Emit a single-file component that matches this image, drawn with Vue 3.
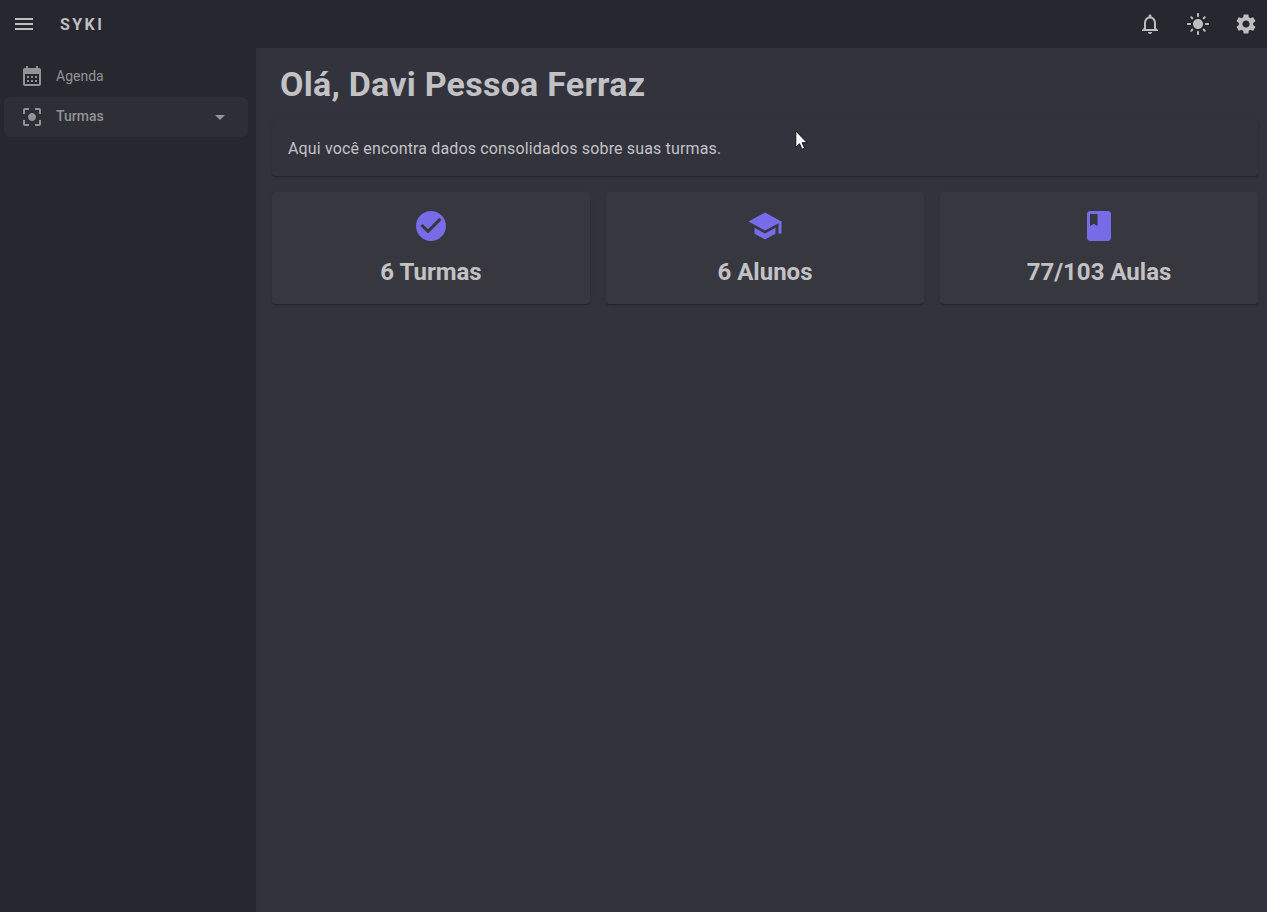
<script setup>
const cards = [
  { text: '6 Turmas', icon: 'M12 2C6.48 2 2 6.48 2 12s4.48 10 10 10 10-4.48 10-10S17.52 2 12 2zm-2 15l-5-5 1.41-1.41L10 14.17l7.59-7.59L19 8l-9 9z' },
  { text: '6 Alunos', icon: 'M5 13.18v4L12 21l7-3.82v-4L12 17l-7-3.82zM12 3L1 9l11 6 9-4.91V17h2V9L12 3z' },
  { text: '77/103 Aulas', icon: 'M18 2H6c-1.1 0-2 .9-2 2v16c0 1.1.9 2 2 2h12c1.1 0 2-.9 2-2V4c0-1.1-.9-2-2-2zM6 4h5v8l-2.5-1.5L6 12V4z' },
]
const actions = [
  'M12 22c1.1 0 2-.9 2-2h-4c0 1.1.9 2 2 2zm6-6v-5c0-3.07-1.63-5.64-4.5-6.32V4c0-.83-.67-1.5-1.5-1.5s-1.5.67-1.5 1.5v.68C7.64 5.36 6 7.92 6 11v5l-2 2v1h16v-1l-2-2zm-2 1H8v-6c0-2.48 1.51-4.5 4-4.5s4 2.02 4 4.5v6z',
  'M12 7c-2.76 0-5 2.24-5 5s2.24 5 5 5 5-2.24 5-5-2.24-5-5-5zM2 13h2c.55 0 1-.45 1-1s-.45-1-1-1H2c-.55 0-1 .45-1 1s.45 1 1 1zm18 0h2c.55 0 1-.45 1-1s-.45-1-1-1h-2c-.55 0-1 .45-1 1s.45 1 1 1zM11 2v2c0 .55.45 1 1 1s1-.45 1-1V2c0-.55-.45-1-1-1s-1 .45-1 1zm0 18v2c0 .55.45 1 1 1s1-.45 1-1v-2c0-.55-.45-1-1-1s-1 .45-1 1zM5.99 4.58a.996.996 0 0 0-1.41 0 .996.996 0 0 0 0 1.41l1.06 1.06c.39.39 1.03.39 1.41 0s.39-1.03 0-1.41L5.99 4.58zm12.37 12.37a.996.996 0 0 0-1.41 0 .996.996 0 0 0 0 1.41l1.06 1.06c.39.39 1.03.39 1.41 0a.996.996 0 0 0 0-1.41l-1.06-1.06zm1.06-10.96a.996.996 0 0 0 0-1.41.996.996 0 0 0-1.41 0l-1.06 1.06c-.39.39-.39 1.03 0 1.41s1.03.39 1.41 0l1.06-1.06zM7.05 18.36a.996.996 0 0 0 0-1.41.996.996 0 0 0-1.41 0l-1.06 1.06c-.39.39-.39 1.03 0 1.41s1.03.39 1.41 0l1.06-1.06z',
  'M19.14 12.94c.04-.3.06-.61.06-.94 0-.32-.02-.64-.07-.94l2.03-1.58c.18-.14.23-.41.12-.61l-1.92-3.32c-.12-.22-.37-.29-.59-.22l-2.39.96c-.5-.38-1.03-.7-1.62-.94l-.36-2.54c-.04-.24-.24-.41-.48-.41h-3.84c-.24 0-.43.17-.47.41l-.36 2.54c-.59.24-1.13.57-1.62.94l-2.39-.96c-.22-.08-.47 0-.59.22L2.74 8.87c-.12.21-.08.47.12.61l2.03 1.58c-.05.3-.09.63-.09.94s.02.64.07.94l-2.03 1.58c-.18.14-.23.41-.12.61l1.92 3.32c.12.22.37.29.59.22l2.39-.96c.5.38 1.03.7 1.62.94l.36 2.54c.05.24.24.41.48.41h3.84c.24 0 .44-.17.47-.41l.36-2.54c.59-.24 1.13-.56 1.62-.94l2.39.96c.22.08.47 0 .59-.22l1.92-3.32c.12-.22.07-.47-.12-.61l-2.01-1.58zM12 15.6c-1.98 0-3.6-1.62-3.6-3.6s1.62-3.6 3.6-3.6 3.6 1.62 3.6 3.6-1.62 3.6-3.6 3.6z',
]
</script>

<template>
  <div class="layout">
    <header class="appbar">
      <svg class="icon" viewBox="0 0 24 24"><path d="M3 18h18v-2H3v2zm0-5h18v-2H3v2zm0-7v2h18V6H3z" /></svg>
      <span class="brand">SYKI</span>
      <div class="actions">
        <svg v-for="(d, i) in actions" :key="i" class="icon" viewBox="0 0 24 24"><path :d="d" /></svg>
      </div>
    </header>
    <div class="body">
      <nav class="drawer">
        <a class="link">
          <svg class="icon" viewBox="0 0 24 24"><path d="M19 4h-1V2h-2v2H8V2H6v2H5c-1.11 0-1.99.9-1.99 2L3 20c0 1.1.89 2 2 2h14c1.1 0 2-.9 2-2V6c0-1.1-.9-2-2-2zm0 16H5V10h14v10zM9 14H7v-2h2v2zm4 0h-2v-2h2v2zm4 0h-2v-2h2v2zm-8 4H7v-2h2v2zm4 0h-2v-2h2v2zm4 0h-2v-2h2v2z" /></svg>
          <span class="label">Agenda</span>
        </a>
        <a class="link group">
          <svg class="icon" viewBox="0 0 24 24"><path d="M12 8c-2.21 0-4 1.79-4 4s1.79 4 4 4 4-1.79 4-4-1.79-4-4-4zm-7 7H3v4c0 1.1.9 2 2 2h4v-2H5v-4zM5 5h4V3H5c-1.1 0-2 .9-2 2v4h2V5zm14-2h-4v2h4v4h2V5c0-1.1-.9-2-2-2zm0 16h-4v2h4c1.1 0 2-.9 2-2v-4h-2v4z" /></svg>
          <span class="label">Turmas</span>
          <svg class="icon" viewBox="0 0 24 24"><path d="M7 10l5 5 5-5z" /></svg>
        </a>
      </nav>
      <main class="main">
        <h1 class="title">Olá, Davi Pessoa Ferraz</h1>
        <div class="paper intro">Aqui você encontra dados consolidados sobre suas turmas.</div>
        <div class="cards">
          <section v-for="c in cards" :key="c.text" class="paper card">
            <svg class="card-icon" viewBox="0 0 24 24"><path :d="c.icon" /></svg>
            <h2 class="card-text">{{ c.text }}</h2>
          </section>
        </div>
      </main>
    </div>
    <svg class="cursor" viewBox="0 0 13 21"><path d="M.8 1v16.2l3.7-3.5 2.5 5.6 2.6-1.1-2.5-5.5h5z" fill="#fff" stroke="#111119" stroke-width="1" /></svg>
  </div>
</template>

<style>
body {
  margin: 0;
  background: #32333d;
}
</style>

<style scoped>
.layout {
  position: relative;
  display: flex;
  flex-direction: column;
  height: 100vh;
  overflow: hidden;
  background: #32333d;
  color: #c2c2c5;
  font-family: Roboto, "Liberation Sans", sans-serif;
}
.icon {
  width: 24px;
  height: 24px;
  flex: none;
  fill: currentColor;
}
.appbar {
  display: flex;
  align-items: center;
  height: 48px;
  flex: none;
  box-sizing: border-box;
  padding: 0 9px 0 12px;
  background: #27272f;
  color: #bebec1;
}
.brand {
  margin-left: 24px;
  font-size: 16px;
  font-weight: 700;
  letter-spacing: 2.4px;
}
.actions {
  display: flex;
  gap: 24px;
  margin-left: auto;
}
.body {
  display: flex;
  flex: 1;
}
.drawer {
  width: 256px;
  flex: none;
  box-sizing: border-box;
  padding: 8px 8px 0 4px;
  background: #27272f;
  color: #939397;
  clip-path: inset(0 -4px 0 0);
  box-shadow: 0 0 3px rgba(0, 0, 0, 0.12);
}
.link {
  display: flex;
  align-items: center;
  height: 40px;
  box-sizing: border-box;
  padding: 0 16px;
  font-size: 14px;
}
.group {
  margin-top: 1px;
  border-radius: 6px;
  background: #2e2e36;
  font-weight: 500;
}
.label {
  flex: 1;
  margin-left: 12px;
}
.group .label {
  padding-bottom: 2px;
}
.main {
  flex: 1;
  min-width: 0;
  padding: 16px 9px 0 16px;
}
.title {
  margin: 0 0 16px 8px;
  font-size: 34px;
  line-height: 40px;
  font-weight: 700;
  letter-spacing: 0.25px;
}
.paper {
  border-radius: 4px;
  box-shadow: 0 2px 1px -1px rgba(0, 0, 0, 0.16), 0 1px 1px rgba(0, 0, 0, 0.12), 0 1px 3px rgba(0, 0, 0, 0.12);
}
.intro {
  padding: 17px 16px 15px;
  font-size: 16px;
  line-height: 24px;
  letter-spacing: 0.15px;
  background: #32333d;
}
.cards {
  display: grid;
  grid-template-columns: repeat(3, 1fr);
  gap: 16px;
  margin-top: 16px;
}
.card {
  display: flex;
  flex-direction: column;
  align-items: center;
  height: 112px;
  box-sizing: border-box;
  padding-top: 16px;
  background: #373740;
}
.card-icon {
  width: 36px;
  height: 36px;
  fill: #776be7;
}
.card-text {
  margin: 12px 0 0;
  font-size: 24px;
  line-height: 32px;
  font-weight: 700;
}
.cursor {
  position: absolute;
  left: 795px;
  top: 130px;
  width: 13px;
  height: 21px;
}
</style>
